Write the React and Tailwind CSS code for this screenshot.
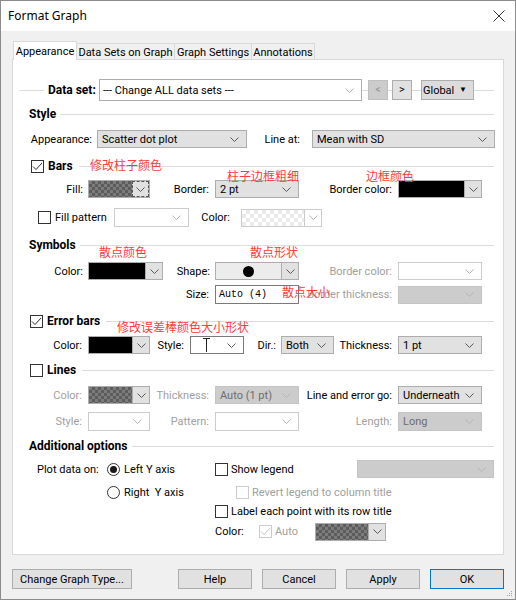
const COMBO = {
  list: "border-[#adadad] bg-[#e1e1e1]",
  edit: "border-[#7a7a7a] bg-white",
  off: "border-[#c4c4c4] bg-[#cccccc] text-[#6d6d6d]",
  blank: "border-[#cccccc] bg-white",
};

const FILLS = {
  black: "bg-black",
  check:
    "bg-[repeating-conic-gradient(#5c5c5c_0%_25%,#7c7c7c_0%_50%)] bg-[length:6px_6px]",
  faint:
    "bg-[repeating-conic-gradient(#ebebeb_0%_25%,#ffffff_0%_50%)] bg-[length:8px_8px]",
  white: "bg-white",
};

function Chevron({ dim }) {
  return (
    <svg width="9" height="5" viewBox="0 0 9 5" className="shrink-0">
      <polyline
        points="0.5,0.5 4.5,4.5 8.5,0.5"
        fill="none"
        stroke={dim ? "#b4b4b4" : "#5a5a5a"}
        strokeWidth="1"
      />
    </svg>
  );
}

function Combo({ w, kind = "list", h = "h-[18px]", children }) {
  return (
    <div
      className={`flex ${h} ${w} shrink-0 items-center justify-between border pl-[4px] pr-[7px] ${COMBO[kind]}`}
    >
      <span className="whitespace-nowrap leading-none">{children}</span>
      <Chevron dim={kind === "off" || kind === "blank"} />
    </div>
  );
}

// colour picker: a swatch plus a small drop button on the right
function Swatch({ w, fill, focus, dim }) {
  return (
    <div
      className={`flex h-[18px] ${w} shrink-0 border ${dim ? "border-[#cccccc]" : "border-[#adadad]"}`}
    >
      <div className={`flex-1 ${FILLS[fill]}`} />
      <div
        className={`flex w-[17px] items-center justify-center ${
          focus
            ? "border border-dashed border-[#555] bg-[#e1e1e1]"
            : dim
              ? "border-l border-[#cccccc] bg-white"
              : "border-l border-[#adadad] bg-[#e1e1e1]"
        }`}
      >
        <Chevron dim={dim} />
      </div>
    </div>
  );
}

function Check({ on, off }) {
  return (
    <span
      className={`flex h-[13px] w-[13px] shrink-0 items-center justify-center border bg-white ${
        off ? "border-[#cccccc]" : "border-[#333333]"
      }`}
    >
      {on && (
        <svg width="11" height="9" viewBox="0 0 11 9">
          <polyline
            points="1,4.5 4,7.5 10,1"
            fill="none"
            stroke={off ? "#c4c4c4" : "#333333"}
            strokeWidth="1"
          />
        </svg>
      )}
    </span>
  );
}

function Radio({ on }) {
  return (
    <span className="flex h-[13px] w-[13px] shrink-0 items-center justify-center rounded-full border border-[#333333] bg-white">
      {on && <span className="h-[7px] w-[7px] rounded-full bg-[#1a1a1a]" />}
    </span>
  );
}

function Label({ w, dim, children }) {
  return (
    <span
      className={`${w} shrink-0 whitespace-nowrap text-right leading-none ${dim ? "text-[#a0a0a0]" : ""}`}
    >
      {children}
    </span>
  );
}

function Header({ mt, check, gap = "ml-[4px]", children }) {
  return (
    <div className={`flex h-[16px] items-center ${mt}`}>
      {check}
      <span className={`${check ? "ml-[4px]" : ""} whitespace-nowrap text-[12px] font-bold leading-none`}>
        {children}
      </span>
      <span className={`${gap} h-px flex-1 bg-[#dcdcdc]`} />
    </div>
  );
}

function Note({ className, children }) {
  return (
    <span
      className={`absolute whitespace-nowrap font-['Noto_Sans_CJK_SC',sans-serif] text-[12px] leading-none text-[#ff3b3b] ${className}`}
    >
      {children}
    </span>
  );
}

function Row({ mt, h = "h-[18px]", children }) {
  return <div className={`flex ${h} items-center ${mt}`}>{children}</div>;
}

function DataSetRow() {
  return (
    <div className="-ml-[10px] flex h-[22px] items-center">
      <span className="h-px w-[25px] bg-[#dcdcdc]" />
      <span className="ml-[4px] w-[47px] whitespace-nowrap text-[12px] font-bold leading-none">Data set:</span>
      <div className="ml-[4px] flex h-[22px] w-[263px] items-center justify-between border border-[#adadad] bg-white pl-[3px] pr-[7px]">
        <span className="leading-none">--- Change ALL data sets ---</span>
        <Chevron dim />
      </div>
      <span className="h-px w-[6px] bg-[#dcdcdc]" />
      <div className="flex h-[20px] w-[20px] items-center justify-center border border-[#bfbfbf] bg-[#cccccc] text-[#9a9a9a]">
        &lt;
      </div>
      <span className="h-px w-[4px] bg-[#dcdcdc]" />
      <div className="flex h-[20px] w-[20px] items-center justify-center border border-[#adadad] bg-[#e1e1e1]">
        &gt;
      </div>
      <span className="h-px w-[9px] bg-[#dcdcdc]" />
      <div className="flex h-[20px] w-[53px] items-center justify-between border border-[#adadad] bg-[#dcdcdc] pl-[1px] pr-[6px]">
        <span className="leading-none">Global</span>
        <span className="text-[8px] leading-none">▼</span>
      </div>
      <span className="h-px flex-1 bg-[#dcdcdc]" />
    </div>
  );
}

function AppearancePanel() {
  return (
    <div className="relative -mt-px flex h-[496px] flex-col border border-[#d9d9d9] bg-white pl-[16px] pr-[9px] pt-[19px]">
      <DataSetRow />

      <Header mt="mt-[5px]">Style</Header>
      <Row mt="mt-[8px]">
        <Label w="w-[63px]">Appearance:</Label>
        <div className="ml-[5px]">
          <Combo w="w-[150px]">Scatter dot plot</Combo>
        </div>
        <Label w="w-[53px]">Line at:</Label>
        <div className="ml-[12px]">
          <Combo w="w-[183px]">Mean with SD</Combo>
        </div>
      </Row>

      <Header mt="mt-[10px]" check={<span className="ml-[2px]"><Check on /></span>} gap="ml-[6px]">
        Bars
      </Header>
      <Row mt="mt-[6px]">
        <Label w="w-[54px]">Fill:</Label>
        <div className="ml-[5px]">
          <Swatch w="w-[62px]" fill="check" focus />
        </div>
        <Label w="w-[59px]">Border:</Label>
        <div className="ml-[6px]">
          <Combo w="w-[84px]">2 pt</Combo>
        </div>
        <Label w="w-[93px]">Border color:</Label>
        <div className="ml-[6px]">
          <Swatch w="w-[84px]" fill="black" />
        </div>
      </Row>
      <Row mt="mt-[10px]" h="h-[19px]">
        <span className="ml-[9px]">
          <Check />
        </span>
        <span className="ml-[4px] w-[59px] whitespace-nowrap leading-none">Fill pattern</span>
        <Combo w="w-[75px]" kind="blank" h="h-[19px]" />
        <Label w="w-[41px]">Color:</Label>
        <div className="ml-[11px]">
          <Swatch w="w-[81px]" fill="faint" dim />
        </div>
      </Row>

      <Header mt="mt-[10px]">Symbols</Header>
      <Row mt="mt-[9px]">
        <Label w="w-[54px]">Color:</Label>
        <div className="ml-[5px]">
          <Swatch w="w-[75px]" fill="black" />
        </div>
        <Label w="w-[47px]">Shape:</Label>
        <div className="ml-[5px] flex h-[18px] w-[84px] border border-[#adadad]">
          <div className="flex flex-1 items-center justify-center bg-[#ececec]">
            <span className="h-[11px] w-[11px] rounded-full bg-black" />
          </div>
          <div className="flex w-[17px] items-center justify-center border-l border-[#adadad] bg-[#e1e1e1]">
            <Chevron />
          </div>
        </div>
        <Label w="w-[93px]" dim>
          Border color:
        </Label>
        <div className="ml-[6px]">
          <Combo w="w-[84px]" kind="blank" />
        </div>
      </Row>
      <Row mt="mt-[5px]" h="h-[19px]">
        <Label w="w-[180px]">Size:</Label>
        <div className="ml-[6px] flex h-[19px] w-[84px] items-center border border-[#7a7a7a] bg-white pl-[3px] font-['Liberation_Mono',monospace] text-[10px] leading-none">
          Auto (4)
        </div>
        <Label w="w-[93px]" dim>
          Border thickness:
        </Label>
        <div className="ml-[6px]">
          <Combo w="w-[84px]" kind="off" />
        </div>
      </Row>

      <Header mt="mt-[9px]" check={<span className="ml-[1px]"><Check on /></span>} gap="ml-[6px]">
        Error bars
      </Header>
      <Row mt="mt-[7px]">
        <Label w="w-[53px]">Color:</Label>
        <div className="ml-[6px]">
          <Swatch w="w-[62px]" fill="black" />
        </div>
        <Label w="w-[34px]">Style:</Label>
        <div className="ml-[6px] flex h-[18px] w-[54px] items-center justify-between border border-[#7a7a7a] bg-white pl-[12px] pr-[7px]">
          <svg width="7" height="14" viewBox="0 0 7 14">
            <path d="M0 0.5H7M3.5 0.5V14" stroke="#222" strokeWidth="1" fill="none" />
          </svg>
          <Chevron />
        </div>
        <Label w="w-[32px]">Dir.:</Label>
        <div className="ml-[5px]">
          <Combo w="w-[53px]">Both</Combo>
        </div>
        <Label w="w-[58px]">Thickness:</Label>
        <div className="ml-[6px]">
          <Combo w="w-[84px]">1 pt</Combo>
        </div>
      </Row>

      <Header mt="mt-[8px]" check={<span className="ml-[1px]"><Check /></span>} gap="ml-[6px]">
        Lines
      </Header>
      <Row mt="mt-[8px]">
        <Label w="w-[53px]" dim>
          Color:
        </Label>
        <div className="ml-[6px]">
          <Swatch w="w-[62px]" fill="check" />
        </div>
        <Label w="w-[59px]" dim>
          Thickness:
        </Label>
        <div className="ml-[6px]">
          <Combo w="w-[84px]" kind="off">
            Auto (1 pt)
          </Combo>
        </div>
        <Label w="w-[93px]">Line and error go:</Label>
        <div className="ml-[6px]">
          <Combo w="w-[84px]">Underneath</Combo>
        </div>
      </Row>
      <Row mt="mt-[8px]" h="h-[19px]">
        <Label w="w-[53px]" dim>
          Style:
        </Label>
        <div className="ml-[6px]">
          <Combo w="w-[62px]" kind="blank" h="h-[19px]" />
        </div>
        <Label w="w-[59px]" dim>
          Pattern:
        </Label>
        <div className="ml-[6px]">
          <Combo w="w-[84px]" kind="blank" h="h-[19px]" />
        </div>
        <Label w="w-[93px]" dim>
          Length:
        </Label>
        <div className="ml-[6px]">
          <Combo w="w-[84px]" kind="off" h="h-[19px]">
            Long
          </Combo>
        </div>
      </Row>

      <Header mt="mt-[7px]">Additional options</Header>
      <div className="mt-[6px] flex">
        <div className="flex w-[186px] shrink-0 flex-col">
          <div className="flex h-[18px] items-center">
            <span className="ml-[8px] w-[70px] whitespace-nowrap leading-none">Plot data on:</span>
            <Radio on />
            <span className="ml-[4px] whitespace-nowrap leading-none">Left Y axis</span>
          </div>
          <div className="mt-[5px] flex h-[18px] items-center pl-[78px]">
            <Radio />
            <span className="ml-[4px] whitespace-pre leading-none">Right  Y axis</span>
          </div>
        </div>
        <div className="flex flex-1 flex-col">
          <div className="flex h-[18px] items-center">
            <Check />
            <span className="ml-[3px] leading-none">Show legend</span>
            <div className="ml-auto">
              <Combo w="w-[137px]" kind="off" />
            </div>
          </div>
          <div className="mt-[5px] flex h-[18px] items-center pl-[21px]">
            <Check off />
            <span className="ml-[3px] whitespace-nowrap leading-none text-[#a0a0a0]">
              Revert legend to column title
            </span>
          </div>
          <div className="mt-px flex h-[18px] items-center">
            <Check />
            <span className="ml-[3px] whitespace-nowrap leading-none">Label each point with its row title</span>
          </div>
          <div className="mt-[2px] flex h-[19px] items-center">
            <span className="w-[44px] leading-none">Color:</span>
            <Check on off />
            <span className="ml-[3px] w-[40px] leading-none text-[#a0a0a0]">Auto</span>
            <Swatch w="w-[71px]" fill="check" />
          </div>
        </div>
      </div>

      <Note className="left-[77px] top-[99px]">修改柱子颜色</Note>
      <Note className="left-[214px] top-[110px]">柱子边框粗细</Note>
      <Note className="left-[353px] top-[110px]">边框颜色</Note>
      <Note className="left-[86px] top-[186px]">散点颜色</Note>
      <Note className="left-[237px] top-[186px]">散点形状</Note>
      <Note className="left-[269px] top-[226px]">散点大小</Note>
      <Note className="left-[104px] top-[261px]">修改误差棒颜色大小形状</Note>
    </div>
  );
}

const TABS = [
  ["Data Sets on Graph", "w-[99px]"],
  ["Graph Settings", "w-[78px]"],
  ["Annotations", "w-[64px]"],
];

function Tabs() {
  return (
    <div className="mt-[10px] flex items-end pl-px">
      <div className="relative z-10 flex h-[19px] w-[64px] items-center justify-center border border-b-0 border-[#d9d9d9] bg-white leading-none">
        Appearance
      </div>
      {TABS.map(([t, w]) => (
        <div
          key={t}
          className={`-ml-px flex h-[17px] ${w} items-center justify-center whitespace-nowrap border border-b-0 border-[#d9d9d9] bg-[#f0f0f0] leading-none`}
        >
          {t}
        </div>
      ))}
    </div>
  );
}

function Btn({ w, focus, children }) {
  return (
    <div
      className={`flex h-[20px] ${w} items-center justify-center whitespace-nowrap border bg-[#e1e1e1] leading-none ${
        focus ? "border-[#0078d7]" : "border-[#adadad]"
      }`}
    >
      {children}
    </div>
  );
}

export default function App() {
  return (
    <div className="relative flex h-[600px] w-[516px] flex-col border border-[#8c8c8c] bg-[#f0f0f0] font-['Roboto',sans-serif] text-[11px] text-black">
      <div className="flex h-[30px] items-center justify-between bg-white pl-[7px] pr-[10px]">
        <span className="font-['Noto_Sans',sans-serif] text-[12px] leading-none">Format Graph</span>
        <svg width="12" height="12" viewBox="0 0 12 12">
          <path d="M0.5 0.5L11.5 11.5M11.5 0.5L0.5 11.5" stroke="#333" strokeWidth="1" />
        </svg>
      </div>
      <div className="flex flex-1 flex-col px-[11px]">
        <Tabs />
        <AppearancePanel />
        <div className="mt-[14px] flex gap-[10px]">
          <Btn w="w-[120px]">Change Graph Type...</Btn>
          <div className="flex-1" />
          <Btn w="w-[74px]">Help</Btn>
          <Btn w="w-[74px]">Cancel</Btn>
          <Btn w="w-[74px]">Apply</Btn>
          <Btn w="w-[74px]" focus>
            OK
          </Btn>
        </div>
      </div>
      <svg width="6" height="6" viewBox="0 0 6 6" className="absolute bottom-[2px] right-[2px]">
        <rect x="4" y="0" width="1" height="1" fill="#a0a0a0" />
        <rect x="2" y="2" width="1" height="1" fill="#a0a0a0" />
        <rect x="4" y="2" width="1" height="1" fill="#a0a0a0" />
        <rect x="0" y="4" width="1" height="1" fill="#a0a0a0" />
        <rect x="2" y="4" width="1" height="1" fill="#a0a0a0" />
        <rect x="4" y="4" width="1" height="1" fill="#a0a0a0" />
      </svg>
    </div>
  );
}
